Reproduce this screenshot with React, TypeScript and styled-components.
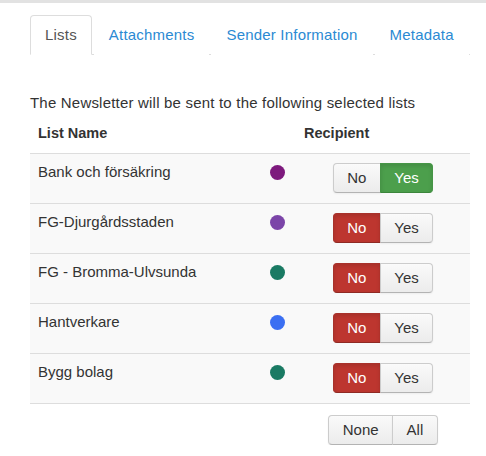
import React from "react";
import styled, { createGlobalStyle } from "styled-components";

const Global = createGlobalStyle`
  html, body { margin: 0; padding: 0; background: #fff; }
  body {
    font-family: "Liberation Sans", Arial, sans-serif;
    font-size: 15px;
    line-height: 20px;
    color: #333;
  }
`;

const TopBar = styled.div`
  height: 3px;
  background: #e2e2e2;
`;

const Page = styled.div`
  padding: 12px 0 0 30px;
  width: 440px;
`;

const Tabs = styled.ul`
  display: flex;
  list-style: none;
  margin: 0;
  padding: 0;
  border-bottom: 1px solid #ddd;
`;

const Tab = styled.li<{ $active?: boolean }>`
  flex: 0 0 auto;
  white-space: nowrap;
  margin-right: 2px;
  margin-bottom: -1px;
  height: 38px;
  padding: 0 14px;
  display: flex;
  align-items: center;
  border: 1px solid ${(p) => (p.$active ? "#ddd" : "transparent")};
  border-bottom-color: ${(p) => (p.$active ? "#fff" : "transparent")};
  border-radius: 4px 4px 0 0;
  background: #fff;
  color: ${(p) => (p.$active ? "#555" : "#2b8ad3")};
  letter-spacing: 0.2px;
  cursor: pointer;
`;

const Intro = styled.p`
  margin: 38px 0 0;
  letter-spacing: 0.2px;
`;

const Table = styled.table`
  width: 440px;
  border-collapse: collapse;
  table-layout: fixed;
`;

const Th = styled.th`
  text-align: left;
  font-weight: bold;
  font-size: 14.5px;
  padding: 10px 8px 10px;
`;

const Tr = styled.tr`
  background: #f9f9f9;
  border-top: 1px solid #ddd;
  border-bottom: 1px solid #ddd;
`;

const Td = styled.td<{ $center?: boolean }>`
  vertical-align: top;
  padding: 8px 8px 10px;
  height: 31px;
  white-space: nowrap;
  text-align: ${(p) => (p.$center ? "center" : "left")};
`;

const Dot = styled.span<{ $color: string }>`
  display: block;
  width: 15px;
  height: 15px;
  border-radius: 50%;
  background: ${(p) => p.$color};
  margin: 3px auto 0;
`;

const Group = styled.div`
  display: inline-flex;
  margin-top: 1px;
`;

const Btn = styled.button<{ $on?: "red" | "green" }>`
  font-family: inherit;
  font-size: 15px;
  line-height: 20px;
  height: 30px;
  padding: 4px 13.5px;
  border: 1px solid ${(p) => (p.$on === "red" ? "#a8322b" : p.$on === "green" ? "#469546" : "#ccc")};
  border-bottom-color: ${(p) => (p.$on === "red" ? "#8f2a24" : p.$on === "green" ? "#3c863c" : "#b3b3b3")};
  background: ${(p) =>
    p.$on === "red"
      ? "#bd362f"
      : p.$on === "green"
      ? "#4c9f4c"
      : "linear-gradient(#fafafa, #ececec)"};
  color: ${(p) => (p.$on ? "#fff" : "#333")};
  box-shadow: ${(p) => (p.$on ? "inset 0 2px 4px rgba(0,0,0,.12)" : "inset 0 1px 0 rgba(255,255,255,.2), 0 1px 2px rgba(0,0,0,.05)")};
  border-radius: 0;
  &:first-child { border-radius: 4px 0 0 4px; }
  &:last-child { border-radius: 0 4px 4px 0; margin-left: -1px; }
`;

const Footer = styled.div`
  width: 174px;
  margin-left: 266px;
  display: flex;
  justify-content: center;
  padding-top: 10px;
`;

const lists = [
  { name: "Bank och försäkring", color: "#7d1a7d", yes: true },
  { name: "FG-Djurgårdsstaden", color: "#7b45a8", yes: false },
  { name: "FG - Bromma-Ulvsunda", color: "#1a7a63", yes: false },
  { name: "Hantverkare", color: "#3b6ff2", yes: false },
  { name: "Bygg bolag", color: "#1a7a63", yes: false },
];

export default function App() {
  return (
    <>
      <Global />
      <TopBar />
      <Page>
        <Tabs>
          <Tab $active>Lists</Tab>
          <Tab>Attachments</Tab>
          <Tab>Sender Information</Tab>
          <Tab>Metadata</Tab>
        </Tabs>
        <Intro>The Newsletter will be sent to the following selected lists</Intro>
        <Table>
          <colgroup>
            <col style={{ width: 228 }} />
            <col style={{ width: 38 }} />
            <col style={{ width: 174 }} />
          </colgroup>
          <thead>
            <tr>
              <Th>List Name</Th>
              <Th></Th>
              <Th>Recipient</Th>
            </tr>
          </thead>
          <tbody>
            {lists.map((l) => (
              <Tr key={l.name}>
                <Td>{l.name}</Td>
                <Td $center>
                  <Dot $color={l.color} />
                </Td>
                <Td $center>
                  <Group>
                    <Btn $on={l.yes ? undefined : "red"}>No</Btn>
                    <Btn $on={l.yes ? "green" : undefined}>Yes</Btn>
                  </Group>
                </Td>
              </Tr>
            ))}
          </tbody>
        </Table>
        <Footer>
          <Group>
            <Btn>None</Btn>
            <Btn>All</Btn>
          </Group>
        </Footer>
      </Page>
    </>
  );
}
